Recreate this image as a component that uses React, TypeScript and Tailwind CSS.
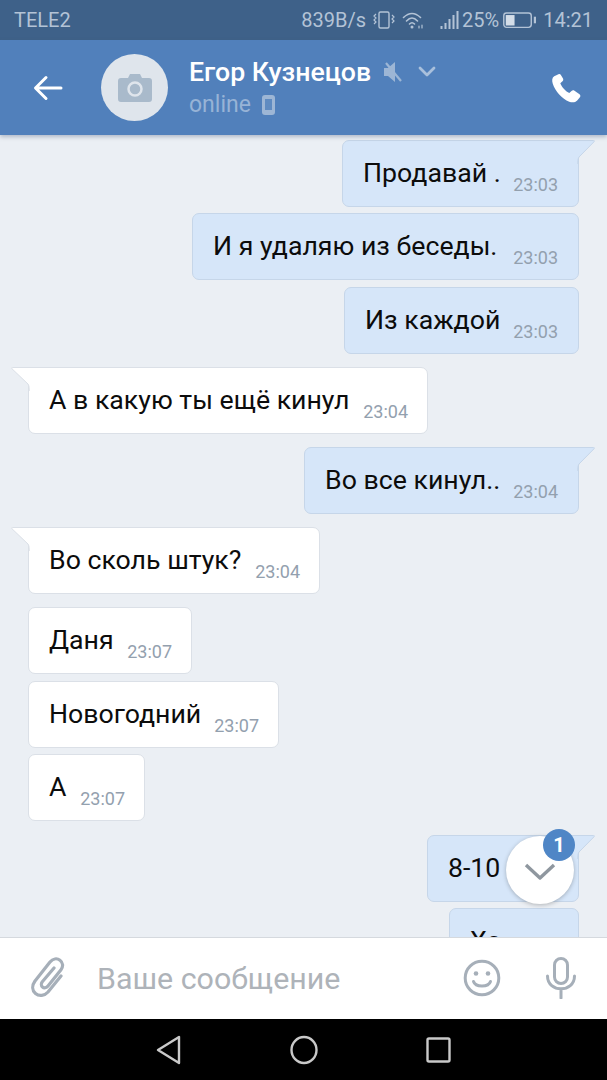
import React from "react";

type Msg = { out: boolean; text: string; time: string; tail?: boolean; mt: string; w: string };

const messages: Msg[] = [
  { out: true, text: "Продавай .", time: "23:03", tail: true, mt: "mt-[5px]", w: "w-[237px]" },
  { out: true, text: "И я удаляю из беседы.", time: "23:03", mt: "mt-[6px]", w: "w-[387px]" },
  { out: true, text: "Из каждой", time: "23:03", mt: "mt-[7px]", w: "w-[235px]" },
  { out: false, text: "А в какую ты ещё кинул", time: "23:04", tail: true, mt: "mt-[13px]", w: "w-[400px]" },
  { out: true, text: "Во все кинул..", time: "23:04", tail: true, mt: "mt-[13px]", w: "w-[275px]" },
  { out: false, text: "Во сколь штук?", time: "23:04", tail: true, mt: "mt-[13px]", w: "w-[292px]" },
  { out: false, text: "Даня", time: "23:07", mt: "mt-[13px]", w: "w-[164px]" },
  { out: false, text: "Новогодний", time: "23:07", mt: "mt-[7px]", w: "w-[251px]" },
  { out: false, text: "А", time: "23:07", mt: "mt-[6px]", w: "w-[117px]" },
  { out: true, text: "8-10", time: "23:07", tail: true, mt: "mt-[14px]", w: "w-[152px]" },
  { out: true, text: "Ха", time: "", mt: "mt-[6px]", w: "w-[130px]" },
];

function Bubble({ m }: { m: Msg }) {
  const tone = m.out
    ? "self-end bg-[#d6e6f9] border-[#c6d6e9] pr-[20px]"
    : "self-start bg-white border-[#dbe0e7] pr-[19px]";
  const corner = m.tail ? (m.out ? "rounded-tr-none" : "rounded-tl-none") : "";
  return (
    <div
      className={`relative shrink-0 h-[67px] ${m.w} ${m.mt} ${tone} ${corner} border rounded-[7px] pl-[20px] flex items-start justify-between`}
    >
      <span className="mt-[13px] text-[26.7px] leading-[38px] text-[#0c0c0c] whitespace-nowrap">{m.text}</span>
      <span className="mt-[32px] text-[18px] leading-[24px] text-[#93a0ae] whitespace-nowrap">{m.time}</span>
      {m.tail && m.out && (
        <svg className="absolute -top-px -right-[18px]" width="19" height="24" viewBox="0 0 19 24">
          <path d="M0 .5H16.500Q18 .5 17 1.800L2 17Q.8 18.500 .8 22V24H0Z" fill="#d6e6f9" />
          <path d="M0 .5H16.500Q18 .5 17 1.800L2 17Q.8 18.500 .8 22V24" fill="none" stroke="#c6d6e9" />
        </svg>
      )}
      {m.tail && !m.out && (
        <svg className="absolute -top-px -left-[19px]" width="20" height="24" viewBox="0 0 20 24">
          <path d="M20 .5H2.500Q1 .5 2 1.800L18 17Q19.200 18.500 19.200 22V24H20Z" fill="#ffffff" />
          <path d="M20 .5H2.500Q1 .5 2 1.800L18 17Q19.200 18.500 19.200 22V24" fill="none" stroke="#dbe0e7" />
        </svg>
      )}
    </div>
  );
}

function StatusBar() {
  return (
    <div className="h-[40px] shrink-0 bg-[#3e6189] flex items-center justify-between pl-[14px] pr-[14px] text-[20px] leading-[24px] text-[#b3c3d6]">
      <span>TELE2</span>
      <div className="flex items-center">
        <span>839B/s</span>
        <svg className="ml-[6px]" width="23" height="20" viewBox="0 0 23 20" fill="none" stroke="#b3c3d6" strokeWidth="1.4">
          <rect x="7" y="2" width="10" height="16" rx="1.500" />
          <path d="M4 4l-2 2 2 2-2 2 2 2-2 2M20 5l2 2-2 2 2 2-2 2" strokeWidth="1.200" />
        </svg>
        <svg className="ml-[7px]" width="23" height="20" viewBox="0 0 23 20" fill="none" stroke="#b3c3d6" strokeWidth="1.6" strokeLinecap="round">
          <path d="M1.500 7.500Q10 -.5 18.500 7.500" />
          <path d="M4.500 11Q10 5 15.500 11" />
          <path d="M7.500 14Q10 11.500 12.500 14" />
          <circle cx="10" cy="17" r="1.500" fill="#b3c3d6" stroke="none" />
          <path d="M17 16v2M20 15v3" strokeWidth="1.200" />
        </svg>
        <svg className="ml-[15px]" width="19" height="20" viewBox="0 0 18 20" fill="#b3c3d6">
          <rect x="0" y="16" width="2" height="3" />
          <rect x="4" y="13" width="2" height="6" />
          <rect x="8" y="9" width="2" height="10" />
          <rect x="12" y="5" width="2" height="14" />
          <rect x="16" y="1" width="2" height="18" />
        </svg>
        <span className="ml-[3px]">25%</span>
        <svg className="ml-[4px]" width="33" height="20" viewBox="0 0 30 18">
          <rect x=".7" y="2.700" width="25" height="13" rx="2.500" fill="none" stroke="#b3c3d6" strokeWidth="1.300" />
          <rect x="2.500" y="4.500" width="8" height="9.500" fill="#d3dde8" />
          <rect x="28" y="6" width="2" height="6" fill="#b3c3d6" />
        </svg>
        <span className="ml-[7px]">14:21</span>
      </div>
    </div>
  );
}

function Header() {
  return (
    <div className="relative z-10 h-[95px] shrink-0 bg-[#5180bb] shadow-[0_2px_4px_rgba(70,90,120,0.35)] flex items-center pl-[33px] pr-[26px]">
      <svg width="30" height="28" viewBox="0 0 30 28" fill="none" stroke="#ffffff" strokeWidth="3" strokeLinecap="round" strokeLinejoin="round">
        <path d="M28 14H3M13 3.500L2.500 14 13 24.500" />
      </svg>
      <div className="ml-[38px] w-[67px] h-[67px] rounded-full bg-[#dfe5ec] flex items-center justify-center">
        <svg width="34" height="28" viewBox="0 0 34 28">
          <path d="M3 4h7l2-4h10l2 4h7a3 3 0 0 1 3 3v18a3 3 0 0 1-3 3H3a3 3 0 0 1-3-3V7a3 3 0 0 1 3-3Z" fill="#a9bacb" />
          <circle cx="17" cy="15" r="6.500" fill="none" stroke="#dfe5ec" strokeWidth="2.500" />
        </svg>
      </div>
      <div className="ml-[21px] flex-1 flex flex-col">
        <div className="flex items-center">
          <span className="text-[26.7px] leading-[34px] font-medium text-white">Егор Кузнецов</span>
          <svg className="ml-[12px]" width="20" height="22" viewBox="0 0 20 22" fill="#9db6d5">
            <path d="M1 7h4l7-6v20l-7-6H1Z" />
            <path d="M3 2l15 18" stroke="#9db6d5" strokeWidth="2.200" />
          </svg>
          <svg className="ml-[15px]" width="18" height="12" viewBox="0 0 18 12" fill="none" stroke="#a9c0dc" strokeWidth="2.800" strokeLinecap="round" strokeLinejoin="round">
            <path d="M2 2l7 7 7-7" />
          </svg>
        </div>
        <div className="flex items-center mt-[1px]">
          <span className="text-[23px] leading-[30px] text-[#97b3d6]">online</span>
          <svg className="ml-[11px]" width="13" height="20" viewBox="0 0 13 20">
            <rect x="0" y="0" width="13" height="20" rx="3" fill="#9db6d5" />
            <rect x="3" y="4" width="7" height="11" fill="#5f8bc1" />
          </svg>
        </div>
      </div>
      <svg width="30" height="30" viewBox="0 0 30 30" fill="#ffffff">
        <path d="M7.500 1.200 3.200 3.300C1 4.500.8 7.500 1.700 10.500c2.500 8 9.500 15.500 16.500 18.200 3 1.100 6 .9 8-1.200l2.700-3.300c.8-1 .6-2.200-.4-3l-5-3.500c-1-.7-2.100-.6-3 .2l-2.200 2.200c-3.500-1.500-7.500-6-9-9.800l2.200-2c.8-.8 1-1.800.5-2.800L9.900 2c-.5-1-1.500-1.300-2.400-.8Z" />
      </svg>
    </div>
  );
}

function InputBar() {
  return (
    <div className="relative z-10 h-[82px] shrink-0 bg-white border-t border-[#d5d9de] flex items-center pl-[31px] pr-[31px]">
      <svg className="-mt-[3px]" width="36" height="42" viewBox="0 0 36 42" fill="none" stroke="#a6afb9" strokeWidth="3.200" strokeLinecap="round" strokeLinejoin="round">
        <path d="M30 20 17 36c-3.500 4-9 4.500-12.500 1.500C1 34.500.8 29.500 4 25L19 6c2.800-3.500 7-4 10-1.800 3 2.300 3.500 6.300 1 9.500L17 30c-1.500 2-4 2.300-5.500 1-1.500-1.200-1.500-3.500-.2-5.300L23 12" />
      </svg>
      <span className="ml-[30px] flex-1 text-[30.4px] leading-[38px] text-[#aeb3b9]">Ваше сообщение</span>
      <svg className="-mt-[2px]" width="38" height="38" viewBox="0 0 38 38" fill="none" stroke="#a6afb9" strokeWidth="3">
        <circle cx="19" cy="19" r="16.800" />
        <circle cx="13" cy="14.500" r="2.300" fill="#a6afb9" stroke="none" />
        <circle cx="25" cy="14.500" r="2.300" fill="#a6afb9" stroke="none" />
        <path d="M10.500 22.500c2 6 15 6 17 0" strokeLinecap="round" />
      </svg>
      <svg className="ml-[45px] -mt-[2px]" width="30" height="42" viewBox="0 0 30 42" fill="none" stroke="#a6afb9" strokeWidth="3" strokeLinecap="round">
        <rect x="8.500" y="1.500" width="13" height="25" rx="6.500" />
        <path d="M1.500 19c0 17 27 17 27 0M15 32v9" />
      </svg>
    </div>
  );
}

function NavBar() {
  return (
    <div className="h-[61px] shrink-0 bg-black flex items-center justify-center gap-[108px]">
      <svg width="26" height="30" viewBox="0 0 26 30" fill="none" stroke="#c9c9c9" strokeWidth="2.400" strokeLinejoin="round">
        <path d="M23 2v26L2 15Z" />
      </svg>
      <svg width="28" height="30" viewBox="0 0 28 30" fill="none" stroke="#c9c9c9" strokeWidth="2.400">
        <ellipse cx="14" cy="15" rx="12.500" ry="13" />
      </svg>
      <svg width="25" height="26" viewBox="0 0 25 26" fill="none" stroke="#c9c9c9" strokeWidth="2.400" strokeLinejoin="round">
        <rect x="1.500" y="1.500" width="22" height="23" rx="1.500" />
      </svg>
    </div>
  );
}

export default function App() {
  return (
    <div className="w-[607px] h-[1080px] flex flex-col overflow-hidden bg-[#ebeff4] font-['Roboto',sans-serif]">
      <StatusBar />
      <Header />
      <div className="relative flex-1 min-h-0 overflow-hidden">
        <div className="flex flex-col pl-[28px] pr-[28px]">
          {messages.map((m, i) => (
            <Bubble key={i} m={m} />
          ))}
        </div>
        <div className="absolute left-[506px] top-[701px] w-[68px] h-[68px] rounded-full bg-white shadow-[0_1px_4px_rgba(0,0,0,0.25)] flex items-center justify-center">
          <svg className="mt-[3px]" width="32" height="20" viewBox="0 0 32 20" fill="none" stroke="#8f979f" strokeWidth="3.400" strokeLinejoin="round">
            <path d="M2 3l14 13L30 3" />
          </svg>
        </div>
        <div className="absolute left-[543px] top-[694px] w-[32px] h-[32px] rounded-full bg-[#4f86c6] flex items-center justify-center text-[20px] leading-[24px] font-bold text-white">
          1
        </div>
      </div>
      <InputBar />
      <NavBar />
    </div>
  );
}
